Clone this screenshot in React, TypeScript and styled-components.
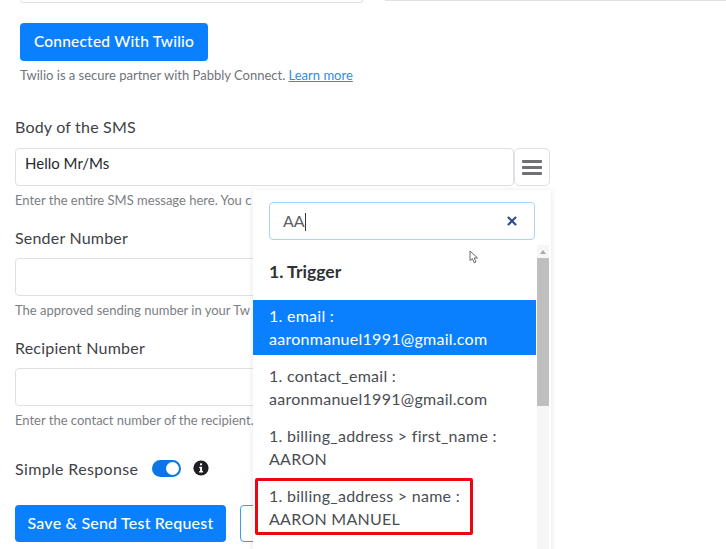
import React from 'react';
import styled, { createGlobalStyle } from 'styled-components';
import { X } from 'lucide-react';

const GlobalStyle = createGlobalStyle`
  html, body {
    margin: 0;
    padding: 0;
    background: #fff;
  }
  * {
    box-sizing: border-box;
  }
`;

const Page = styled.div`
  position: relative;
  width: 726px;
  height: 549px;
  overflow: hidden;
  background: #fff;
  font-family: 'Lato', 'Open Sans', sans-serif;
  color: #3a3d42;
`;

const TopInputs = styled.div`
  display: flex;
  gap: 22px;
  height: 3px;
  padding-left: 20px;
  margin-bottom: 20px;
`;

const CutInput = styled.div<{ $width: number; $bottom: number }>`
  width: ${p => p.$width}px;
  height: ${p => p.$bottom}px;
  border: 1px solid #dfe1e6;
  border-top: none;
  border-radius: 0 0 5px 5px;
`;

const ConnectBlock = styled.div`
  padding-left: 20px;
  margin-bottom: 33px;
`;

const PrimaryButton = styled.button<{ $width: number; $height: number; $size: number }>`
  display: block;
  width: ${p => p.$width}px;
  height: ${p => p.$height}px;
  border: none;
  border-radius: 4px;
  background: #0a80ff;
  color: #fff;
  font-family: inherit;
  font-size: ${p => p.$size}px;
  font-weight: 500;
  letter-spacing: 0.2px;
  text-align: center;
  padding: 0 0 2px;
`;

const PartnerText = styled.p`
  margin: 6px 0 0;
  font-size: 13px;
  line-height: 17px;
  color: #70747a;
`;

const LearnMore = styled.a`
  color: #2f8be6;
  text-decoration: underline;
`;

const Form = styled.div`
  padding-left: 15px;
`;

const Field = styled.div`
  margin-bottom: 20px;
`;

const Label = styled.label`
  display: block;
  font-size: 16px;
  line-height: 20px;
  color: #3f4247;
  letter-spacing: 0.2px;
  margin-bottom: 10px;
`;

const FirstLabel = styled(Label)`
  margin-bottom: 11px;
`;

const InputRow = styled.div`
  display: flex;
`;

const TextInput = styled.div`
  width: 499px;
  height: 38px;
  padding: 0 9px;
  border: 1px solid #dfe0e6;
  border-radius: 4px;
  font-size: 15px;
  line-height: 28px;
  color: #26282c;
`;

const MenuButton = styled.div`
  width: 36px;
  height: 38px;
  border: 1px solid #dfe0e6;
  border-radius: 5px;
  display: flex;
  align-items: center;
  justify-content: center;
  color: #6f7073;
`;

const Hint = styled.p`
  margin: 6px 0 0;
  font-size: 13px;
  line-height: 16px;
  color: #7b7e84;
  white-space: nowrap;
`;

const ToggleRow = styled.div`
  display: flex;
  align-items: center;
  height: 20px;
  margin-top: 30px;
  margin-bottom: 27px;
  font-size: 16px;
  letter-spacing: 0.35px;
  color: #3f4247;
`;

const Toggle = styled.span`
  display: flex;
  justify-content: flex-end;
  align-items: center;
  width: 29px;
  height: 17px;
  margin-left: 14px;
  margin-right: 12px;
  padding-right: 2px;
  border-radius: 9px;
  background: #0a74e8;
`;

const Knob = styled.span`
  width: 13px;
  height: 13px;
  border-radius: 50%;
  background: #fff;
`;

const Actions = styled.div`
  display: flex;
  gap: 14px;
`;

const OutlineButton = styled.div`
  width: 120px;
  height: 37px;
  border: 1px solid #3d9bff;
  border-radius: 4px;
`;

const Dropdown = styled.div`
  position: absolute;
  left: 253px;
  top: 190px;
  width: 298px;
  height: 380px;
  background: #fff;
  box-shadow: 0 1px 6px rgba(60, 64, 80, 0.14);
`;

const SearchBox = styled.div`
  display: flex;
  align-items: center;
  justify-content: space-between;
  width: 266px;
  height: 38px;
  margin: 12px 0 0 16px;
  padding: 0 15px 0 13px;
  border: 1px solid #a9d3f7;
  border-radius: 4px;
  font-size: 16px;
  color: #5c5f65;
`;

const Caret = styled.span`
  display: inline-block;
  width: 1px;
  height: 18px;
  vertical-align: -4px;
  background: #33363a;
`;

const ListArea = styled.div`
  display: flex;
  margin-top: 5px;
`;

const List = styled.div`
  position: relative;
  width: 283px;
`;

const GroupTitle = styled.div`
  height: 55px;
  padding: 17px 0 0 16px;
  font-size: 17.6px;
  line-height: 20px;
  font-weight: 700;
  color: #2e3135;
`;

const Item = styled.div<{ $active?: boolean }>`
  height: 60px;
  padding: 9px 10px 0 16px;
  font-size: 16px;
  line-height: 23px;
  letter-spacing: 0.27px;
  white-space: nowrap;
  background: ${p => (p.$active ? '#0a80ff' : 'transparent')};
  color: ${p => (p.$active ? '#fff' : '#4a4d52')};
`;

const ActiveItem = styled(Item)`
  height: 55px;
  padding-top: 4px;
`;

const Highlight = styled.div`
  position: absolute;
  left: 2px;
  top: 233px;
  width: 218px;
  height: 57px;
  border: 3px solid #ee0512;
  border-radius: 2px;
`;

const Scrollbar = styled.div`
  position: relative;
  width: 12px;
  height: 320px;
  margin-left: 1px;
  background: #f6f6f7;
  padding-top: 13px;
`;

const Thumb = styled.div`
  height: 148px;
  background: #bfbfc0;
`;

const ScrollArrow = styled.svg`
  position: absolute;
  left: 3px;
  top: 5px;
`;

const Pointer = styled.svg`
  position: absolute;
  left: 469px;
  top: 250px;
`;

const App: React.FC = () => {
  return (
    <Page>
      <GlobalStyle />
      <TopInputs>
        <CutInput $width={343} $bottom={3} />
        <CutInput $width={341} $bottom={1} />
      </TopInputs>

      <ConnectBlock>
        <PrimaryButton $width={188} $height={38} $size={15.5}>Connected With Twilio</PrimaryButton>
        <PartnerText>
          Twilio is a secure partner with Pabbly Connect. <LearnMore>Learn more</LearnMore>
        </PartnerText>
      </ConnectBlock>

      <Form>
        <Field>
          <FirstLabel>Body of the SMS</FirstLabel>
          <InputRow>
            <TextInput>Hello Mr/Ms</TextInput>
            <MenuButton>
              <svg width="20" height="15" viewBox="0 0 20 15">
                <rect x="0" y="0" width="20" height="3" rx="1" fill="currentColor" />
                <rect x="0" y="6" width="20" height="3" rx="1" fill="currentColor" />
                <rect x="0" y="12" width="20" height="3" rx="1" fill="currentColor" />
              </svg>
            </MenuButton>
          </InputRow>
          <Hint>Enter the entire SMS message here. You c</Hint>
        </Field>
        <Field>
          <Label>Sender Number</Label>
          <TextInput />
          <Hint>The approved sending number in your Tw</Hint>
        </Field>
        <Field>
          <Label>Recipient Number</Label>
          <TextInput />
          <Hint>Enter the contact number of the recipient.</Hint>
        </Field>
        <ToggleRow>
          Simple Response
          <Toggle>
            <Knob />
          </Toggle>
          <svg width="16" height="16" viewBox="0 0 16 16">
            <circle cx="8" cy="8" r="7.6" fill="#1f1f22" />
            <rect x="7" y="3.2" width="2.1" height="2.1" rx="0.6" fill="#fff" />
            <path d="M6.3 6.8 H9.1 V11 H10 V12.4 H6.2 V11 H7.1 V8.2 H6.3 Z" fill="#fff" />
          </svg>
        </ToggleRow>
        <Actions>
          <PrimaryButton $width={211} $height={37} $size={16}>Save &amp; Send Test Request</PrimaryButton>
          <OutlineButton />
        </Actions>
      </Form>

      <Dropdown>
        <SearchBox>
          <span>
            AA
            <Caret />
          </span>
          <X size={14} strokeWidth={3.6} color="#2f4d8c" />
        </SearchBox>
        <ListArea>
          <List>
            <GroupTitle>1. Trigger</GroupTitle>
            <ActiveItem $active>
              1. email :
              <br />
              aaronmanuel1991@gmail.com
            </ActiveItem>
            <Item>
              1. contact_email :
              <br />
              aaronmanuel1991@gmail.com
            </Item>
            <Item>
              1. billing_address &gt; first_name :
              <br />
              AARON
            </Item>
            <Item>
              1. billing_address &gt; name :
              <br />
              AARON MANUEL
            </Item>
            <Highlight />
          </List>
          <Scrollbar>
            <ScrollArrow width="6" height="4" viewBox="0 0 6 4">
              <path d="M3 0 L6 4 L0 4 Z" fill="#a8a8a8" />
            </ScrollArrow>
            <Thumb />
          </Scrollbar>
        </ListArea>
      </Dropdown>

      <Pointer width="10" height="14" viewBox="0 0 10 14">
        <path d="M1 1 L1 10.5 L3.4 8.6 L5.2 12.8 L7 12 L5.2 8 L8.6 8 Z" fill="#fff" stroke="#55585c" strokeWidth="0.9" />
      </Pointer>
    </Page>
  );
};

export default App;
